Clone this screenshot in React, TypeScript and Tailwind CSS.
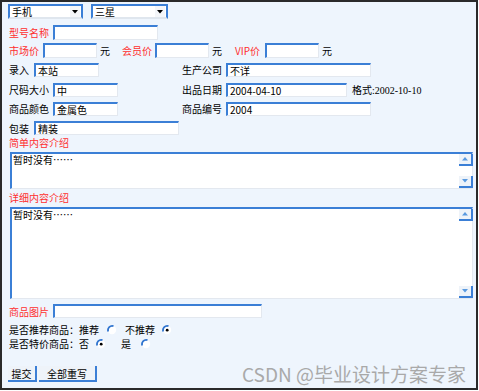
import React from "react";

const F = { fontFamily: '"Noto Sans CJK SC", "Liberation Sans", sans-serif' };

function Box({ w, text, h = 14 }: { w: number; text?: string; h?: number }) {
  return (
    <div
      className="box-border bg-white border-t-2 border-l-2 border-r border-b border-t-[#3b7fd6] border-l-[#3b7fd6] border-r-[#e3e8ef] border-b-[#e3e8ef] text-[10px] leading-[11px] text-black pl-[2px] overflow-hidden whitespace-nowrap"
      style={{ width: w, height: h }}
    >
      {text}
    </div>
  );
}

function Select({ w, text }: { w: number; text: string }) {
  return (
    <div
      className="box-border h-[15px] bg-white border-t-2 border-l-2 border-r-2 border-b-2 border-t-[#3b7fd6] border-l-[#3b7fd6] border-r-[#3b7fd6] border-b-[#dfe6ee] flex items-center text-[10px] text-black"
      style={{ width: w }}
    >
      <span className="flex-1 pl-[2px] leading-[11px]">{text}</span>
      <div className="w-[10px] h-[11px] bg-[#f4f6f9] flex items-center justify-center mr-[1px]">
        <svg width="6" height="4" viewBox="0 0 6 4">
          <path d="M0 0 L6 0 L3 3.5 Z" fill="#000" />
        </svg>
      </div>
    </div>
  );
}

function Radio({ checked }: { checked?: boolean }) {
  return (
    <svg width="10" height="10" viewBox="0 0 10 10" className="shrink-0">
      <circle cx="5" cy="5" r="4.2" fill="#fff" />
      <path d="M1.2 6.5 A4.2 4.2 0 0 1 6.5 1.2" stroke="#2f74cf" strokeWidth="1.8" fill="none" />
      {checked && <circle cx="5.2" cy="5.2" r="1.4" fill="#000" />}
    </svg>
  );
}

function ScrollBtn({ up }: { up?: boolean }) {
  return (
    <div className="w-[14px] h-[12px] box-border bg-[#eef3f9] border-r-2 border-b-2 border-[#3b7fd6] flex items-center justify-center">
      <svg width="6" height="4" viewBox="0 0 6 4">
        {up ? <path d="M0 3.5 L6 3.5 L3 0 Z" fill="#5a9ae0" /> : <path d="M0 0 L6 0 L3 3.5 Z" fill="#5a9ae0" />}
      </svg>
    </div>
  );
}

function TextArea({ h, text }: { h: number; text: string }) {
  return (
    <div
      className="box-border w-[463px] ml-[1px] bg-white border-t-2 border-l-2 border-r border-b border-t-[#3b7fd6] border-l-[#3b7fd6] border-r-[#e3e8ef] border-b-[#e3e8ef] flex"
      style={{ height: h }}
    >
      <div className="flex-1 pl-[1px] text-[10px] leading-[12px] text-black">{text}</div>
      <div className="flex flex-col justify-between mr-[-1px]">
        <ScrollBtn up />
        <ScrollBtn />
      </div>
    </div>
  );
}

const Red = ({ children, className = "" }: { children: React.ReactNode; className?: string }) => (
  <span className={"text-[#ff2f2f] text-[10px] leading-[10px] whitespace-nowrap " + className}>{children}</span>
);
const Lbl = ({ children, className = "" }: { children: React.ReactNode; className?: string }) => (
  <span className={"text-black text-[10px] leading-[10px] whitespace-nowrap " + className}>{children}</span>
);

export default function App() {
  return (
    <div className="w-[479px] h-[391px] bg-white" style={F}>
      <div className="w-[478px] h-[390px] box-border border-2 border-[#2a2a2a] bg-[#eef5fd] pl-[7px] flex flex-col">
        {/* row 1 */}
        <div className="mt-[2px] h-[15px] flex gap-[8px] ml-[-1px]">
          <Select w={75} text="手机" />
          <Select w={77} text="三星" />
        </div>
        {/* row 2 */}
        <div className="mt-[6px] h-[15px] flex items-center">
          <Red className="w-[44px]">型号名称</Red>
          <Box w={105} h={15} />
        </div>
        {/* row 3 */}
        <div className="mt-[3px] h-[15px] flex items-center">
          <Red className="w-[34px]">市场价</Red>
          <Box w={54} h={15} />
          <Lbl className="ml-[3px] w-[22px]">元</Lbl>
          <Red className="w-[33px]">会员价</Red>
          <Box w={54} h={15} />
          <Lbl className="ml-[3px] w-[23px]">元</Lbl>
          <Red className="w-[30px]">VIP价</Red>
          <Box w={54} h={15} />
          <Lbl className="ml-[3px]">元</Lbl>
        </div>
        {/* row 4 */}
        <div className="mt-[5px] h-[14px] flex items-center">
          <div className="w-[173px] flex items-center">
            <Lbl className="w-[25px]">录入</Lbl>
            <Box w={65} text="本站" />
          </div>
          <Lbl className="w-[44px]">生产公司</Lbl>
          <Box w={145} text="不详" />
        </div>
        {/* row 5 */}
        <div className="mt-[6px] h-[14px] flex items-center">
          <div className="w-[173px] flex items-center">
            <Lbl className="w-[44px]">尺码大小</Lbl>
            <Box w={65} text="中" />
          </div>
          <Lbl className="w-[44px]">出品日期</Lbl>
          <Box w={121} text="2004-04-10" />
          <span className="ml-[5px] text-[10px] text-black" style={{ fontFamily: '"Liberation Serif", "Noto Sans CJK SC", serif' }}>
            格式:2002-10-10
          </span>
        </div>
        {/* row 6 */}
        <div className="mt-[5px] h-[14px] flex items-center">
          <div className="w-[173px] flex items-center">
            <Lbl className="w-[44px]">商品颜色</Lbl>
            <Box w={65} text="金属色" />
          </div>
          <Lbl className="w-[44px]">商品编号</Lbl>
          <Box w={145} text="2004" />
        </div>
        {/* row 7 */}
        <div className="mt-[5px] h-[14px] flex items-center">
          <Lbl className="w-[25px] mt-[2px]">包装</Lbl>
          <Box w={145} text="精装" />
        </div>
        <div className="mt-[3px] h-[10px] flex items-center">
          <Red>简单内容介绍</Red>
        </div>
        <div className="mt-[4px]">
          <TextArea h={37} text="暂时没有……" />
        </div>
        <div className="mt-[4px] h-[10px] flex items-center">
          <Red>详细内容介绍</Red>
        </div>
        <div className="mt-[4px]">
          <TextArea h={92} text="暂时没有……" />
        </div>
        <div className="mt-[5px] h-[14px] flex items-center">
          <Red className="w-[44px] mt-[2px]">商品图片</Red>
          <Box w={209} />
        </div>
        <div className="mt-[6px] h-[12px] flex items-center">
          <Lbl>是否推荐商品：推荐</Lbl>
          <span className="ml-[8px]"><Radio /></span>
          <Lbl className="ml-[8px]">不推荐</Lbl>
          <span className="ml-[7px]"><Radio checked /></span>
        </div>
        <div className="mt-[2px] h-[12px] flex items-center">
          <Lbl>是否特价商品：否</Lbl>
          <span className="ml-[7px]"><Radio checked /></span>
          <Lbl className="ml-[15px]">是</Lbl>
          <span className="ml-[10px]"><Radio /></span>
        </div>
        <div className="mt-[14px] h-[18px] flex items-end ml-[-1px]">
          <div className="box-border h-[16px] w-[29px] bg-[#eef3f9] border-r-2 border-b-2 border-[#3b7fd6] flex items-center justify-center text-[10px] text-black">
            提交
          </div>
          <div className="box-border h-[16px] w-[58px] ml-[2px] bg-[#eef3f9] border-r-2 border-b-2 border-[#3b7fd6] flex items-center justify-center text-[10px] text-black">
            全部重写
          </div>
          <div className="flex-1" />
          <span className="text-[19px] leading-[19px] text-[#a9a9a9] mr-[10px] mb-[-1px] whitespace-nowrap">CSDN @毕业设计方案专家</span>
        </div>
      </div>
    </div>
  );
}
